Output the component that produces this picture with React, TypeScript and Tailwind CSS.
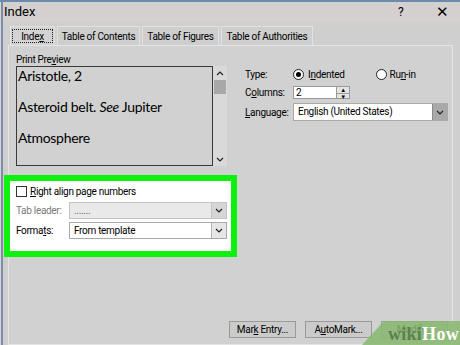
import React from "react";

const Chevron = ({ up = false }: { up?: boolean }) => (
  <svg width="8" height="5" viewBox="0 0 8 5" className={up ? "rotate-180" : ""}>
    <polyline points="1,1 4,4 7,1" fill="none" stroke="#222" strokeWidth="1.2" />
  </svg>
);

const Dropdown = ({
  value,
  disabled = false,
  dark = false,
  className = "",
}: {
  value: string;
  disabled?: boolean;
  dark?: boolean;
  className?: string;
}) => (
  <div
    className={`flex border ${
      disabled ? "border-[#c4c4c4] bg-[#e9e9e9] text-[#6d6d6d]" : "border-[#a9a9a9] bg-white"
    } ${className}`}
  >
    <div className="flex-1 flex items-center pl-[4px] leading-none whitespace-nowrap">{value}</div>
    <div
      className={`w-[15px] flex items-center justify-center border-l ${
        dark ? "bg-[#a9a9a9] border-[#8a8a8a]" : disabled ? "bg-[#d6d6d6] border-[#c4c4c4]" : "bg-[#e6e6e6] border-[#b4b4b4]"
      }`}
    >
      <Chevron />
    </div>
  </div>
);

const Tab = ({ label, active = false, w }: { label: React.ReactNode; active?: boolean; w: string }) => (
  <div
    className={`${w} h-full flex items-center justify-center whitespace-nowrap border border-b-0 border-[#e2e2e2] ${
      active ? "bg-[#d3d3d3]" : "bg-[#cecece]"
    }`}
  >
    {active ? (
      <span className="border border-dotted border-[#222] px-[8px] h-[14px] flex items-center">{label}</span>
    ) : (
      <span>{label}</span>
    )}
  </div>
);

const Button = ({ children }: { children: React.ReactNode }) => (
  <div className="w-[67px] h-[17px] flex items-center justify-center whitespace-nowrap border border-[#9a9a9a] bg-[#cbcbcb]">
    <span>{children}</span>
  </div>
);

export default function App() {
  return (
    <div className="w-[460px] h-[345px] overflow-hidden relative bg-[#cfcfcf] text-black text-[10px] tracking-[-0.3px] font-['Roboto',sans-serif]">
      <div className="h-[2px] bg-[#6a8bad]" />
      <div className="flex h-[343px]">
        <div className="w-[1px] bg-[#d6d6d6]" />
        <div className="w-[2px] bg-[#7d8ca6]" />
        <div className="flex-1 flex flex-col">
          {/* title bar */}
          <div className="h-[20px] flex items-center bg-[#d4d0cf] pl-[1px]">
            <span className="text-[13px] tracking-normal">Index</span>
            <span className="ml-auto text-[12px] mr-[33px]">?</span>
            <span className="text-[15px] mr-[11px] leading-none">✕</span>
          </div>
          <div className="flex-1 flex flex-col pl-[5px] pr-[7px]">
            {/* tabs */}
            <div className="flex h-[19px] mt-[4px] pl-[2px] gap-[2px]">
              <Tab w="w-[45px]" active label={<>Inde<u>x</u></>} />
              <Tab w="w-[83px]" label="Table of Contents" />
              <Tab w="w-[77px]" label="Table of Figures" />
              <Tab w="w-[92px]" label="Table of Authorities" />
            </div>
            {/* panel */}
            <div className="flex-1 flex flex-col border border-[#e4e4e4] bg-[#d1d1d1] pl-[7px] pr-[4px]">
              <div className="flex">
                {/* left column */}
                <div className="w-[211px] flex flex-col pt-[7px]">
                  <div className="h-[13px] flex items-center">
                    <span>
                      Print Pre<u>v</u>iew
                    </span>
                  </div>
                  <div className="flex h-[100px]">
                    <div className="w-[197px] border border-[#3a3a3a] overflow-hidden pl-[1px] font-['Lato',sans-serif] text-[14px] leading-[31px] tracking-[-0.3px] whitespace-nowrap">
                      <div className="-mt-[7px]">Aristotle, 2</div>
                      <div>
                        Asteroid belt. <i>See</i> Jupiter
                      </div>
                      <div>Atmosphere</div>
                      <div className="pt-[4px]">Earth</div>
                    </div>
                    <div className="w-[14px] bg-[#d9d9d9] flex flex-col items-center">
                      <div className="h-[14px] flex items-center justify-center">
                        <Chevron up />
                      </div>
                      <div className="w-[12px] h-[14px] bg-[#a8a8a8]" />
                      <div className="flex-1" />
                      <div className="h-[14px] flex items-center justify-center">
                        <Chevron />
                      </div>
                    </div>
                  </div>
                  {/* highlighted options */}
                  <div className="mt-[9px] -ml-[12px] w-[233px] h-[82px] border-[6px] border-[#0ef00e] bg-white pl-[6px] pr-[4px] pt-[5px]">
                    <div className="flex items-center h-[11px]">
                      <div className="w-[11px] h-[11px] border border-[#333] bg-white" />
                      <span className="ml-[3px]">
                        <u>R</u>ight align page numbers
                      </span>
                    </div>
                    <div className="flex items-center mt-[5px] h-[17px]">
                      <span className="w-[53px] text-[#7a7a7a]">Tab leader:</span>
                      <Dropdown value="......." disabled className="w-[158px] h-[17px]" />
                    </div>
                    <div className="flex items-center mt-[3px] h-[17px]">
                      <span className="w-[53px]">
                        Forma<u>t</u>s:
                      </span>
                      <Dropdown value="From template" className="w-[158px] h-[17px]" />
                    </div>
                  </div>
                </div>
                {/* right column */}
                <div className="flex-1 ml-[18px] flex flex-col pt-[22px]">
                  <div className="flex items-center h-[13px]">
                    <span className="w-[48px]">Type:</span>
                    <div className="w-[11px] h-[11px] rounded-full border border-[#222] bg-white flex items-center justify-center">
                      <div className="w-[5px] h-[5px] rounded-full bg-black" />
                    </div>
                    <span className="ml-[4px]">
                      I<u>n</u>dented
                    </span>
                    <div className="ml-[31px] w-[11px] h-[11px] rounded-full border border-[#222] bg-white" />
                    <span className="ml-[3px]">
                      Ru<u>n</u>-in
                    </span>
                  </div>
                  <div className="flex items-center h-[13px] mt-[5px]">
                    <span className="w-[48px]">
                      C<u>o</u>lumns:
                    </span>
                    <div className="w-[57px] h-[13px] flex border border-[#9a9a9a] bg-white">
                      <div className="flex-1 pl-[2px] flex items-center">2</div>
                      <div className="w-[13px] flex flex-col border-l border-[#9a9a9a] bg-[#e4e4e4]">
                        <div className="flex-1 flex items-center justify-center border-b border-[#9a9a9a] text-[6px] leading-none">▲</div>
                        <div className="flex-1 flex items-center justify-center text-[6px] leading-none">▼</div>
                      </div>
                    </div>
                  </div>
                  <div className="flex items-center h-[18px] mt-[4px]">
                    <span className="w-[48px]">
                      <u>L</u>anguage:
                    </span>
                    <Dropdown value="English (United States)" dark className="w-[155px] h-[18px]" />
                  </div>
                </div>
              </div>
              <div className="flex-1" />
              <div className="flex justify-end gap-[9px] mb-[6px]">
                <Button>
                  Mar<u>k</u> Entry...
                </Button>
                <Button>
                  A<u>u</u>toMark...
                </Button>
                <Button>Modify...</Button>
              </div>
            </div>
          </div>
        </div>
      </div>
      {/* wikiHow watermark */}
      <svg className="absolute right-0 bottom-0" width="98" height="25" viewBox="0 0 98 25">
        <polygon points="0,25 22,1 98,1 98,25" fill="#86b86e" fillOpacity="0.85" />
      </svg>
      <div className="absolute right-[1px] bottom-[2px] font-['Liberation_Serif',serif] font-bold text-[18px] leading-none tracking-[0.3px]">
        <span className="text-[#5f7f52]">wiki</span>
        <span className="text-white">How</span>
      </div>
    </div>
  );
}
